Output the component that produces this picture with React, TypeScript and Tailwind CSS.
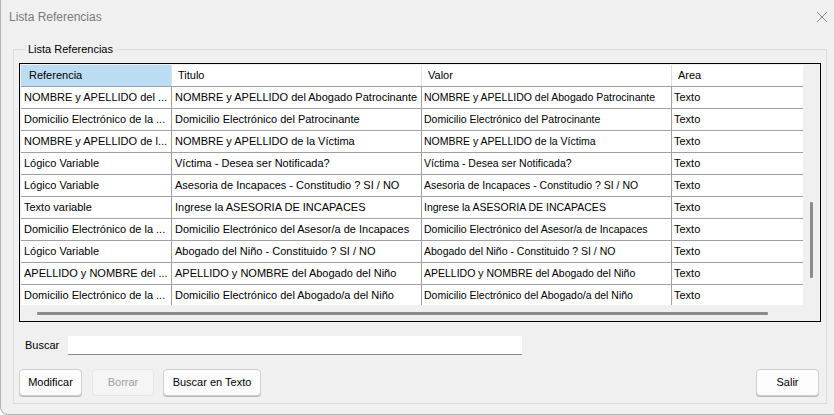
import React from "react";

const rows: [string, string, string, string][] = [
  ["NOMBRE y APELLIDO del ...", "NOMBRE y APELLIDO del Abogado Patrocinante", "NOMBRE y APELLIDO del Abogado Patrocinante", "Texto"],
  ["Domicilio Electrónico de la ...", "Domicilio Electrónico del Patrocinante", "Domicilio Electrónico del Patrocinante", "Texto"],
  ["NOMBRE y APELLIDO de l...", "NOMBRE y APELLIDO de la Víctima", "NOMBRE y APELLIDO de la Víctima", "Texto"],
  ["Lógico Variable", "Víctima - Desea ser Notificada?", "Víctima - Desea ser Notificada?", "Texto"],
  ["Lógico Variable", "Asesoria de Incapaces - Constitudio ? SI / NO", "Asesoria de Incapaces - Constitudio ? SI / NO", "Texto"],
  ["Texto variable", "Ingrese la ASESORIA DE INCAPACES", "Ingrese la ASESORIA DE INCAPACES", "Texto"],
  ["Domicilio Electrónico de la ...", "Domicilio Electrónico del Asesor/a de Incapaces", "Domicilio Electrónico del Asesor/a de Incapaces", "Texto"],
  ["Lógico Variable", "Abogado del Niño - Constituido ? SI / NO", "Abogado del Niño - Constituido ? SI / NO", "Texto"],
  ["APELLIDO y NOMBRE del ...", "APELLIDO y NOMBRE del Abogado del Niño", "APELLIDO y NOMBRE del Abogado del Niño", "Texto"],
  ["Domicilio Electrónico de la ...", "Domicilio Electrónico del Abogado/a del Niño", "Domicilio Electrónico del Abogado/a del Niño", "Texto"],
];

const font = { fontFamily: '"Liberation Sans", Arial, sans-serif' };

export default function App() {
  return (
    <div
      className="w-[834px] h-[415px] bg-[#f0f0f0] text-[11px] text-black flex flex-col border-l border-b border-[#b4b4b4] rounded-bl-[8px] overflow-hidden"
      style={font}
    >
      {/* Title bar */}
      <div className="h-[33px] flex items-center justify-between pl-[8px] pr-[6px] shrink-0">
        <span className="text-[12px] text-[#7a7a7a]">Lista Referencias</span>
        <svg width="12" height="12" viewBox="0 0 12 12" className="mr-[0px]">
          <path d="M1 1 L11 11 M11 1 L1 11" stroke="#8a8a8a" strokeWidth="1" fill="none" />
        </svg>
      </div>

      {/* Group box */}
      <fieldset className="mx-[12px] mt-[9px] border border-[#dcdcdc] px-[5px] pt-[7px] pb-[6px] flex flex-col h-[362px]">
        <legend className="ml-[7px] px-[2px] text-[11px] leading-[14px]">Lista Referencias</legend>

        {/* Grid */}
        <div className="border border-black w-[802px] h-[259px] flex flex-col bg-[#f0f0f0] shrink-0">
          <div className="flex h-[241px] pl-[1px] pt-[1px]">
            <div className="w-[782px] h-[240px] overflow-hidden bg-white">
              {/* header */}
              <div className="flex h-[22px] border-b border-[#a0a0a0]">
                <div className="w-[150px] bg-[#bcdcf4] flex items-center pl-[8px]">Referencia</div>
                <div className="w-[250px] border-l border-[#e0e0e0] flex items-center pl-[6px]">Titulo</div>
                <div className="w-[250px] border-l border-[#e0e0e0] flex items-center pl-[6px]">Valor</div>
                <div className="w-[132px] border-l border-[#e0e0e0] flex items-center pl-[6px]">Area</div>
              </div>
              {rows.map((r, i) => (
                <div key={i} className="flex h-[22px] border-b border-[#a0a0a0]">
                  <div className="w-[150px] flex items-center pl-[3px] whitespace-nowrap overflow-hidden">{r[0]}</div>
                  <div className="w-[250px] border-l border-[#a0a0a0] flex items-center pl-[3px] whitespace-nowrap overflow-hidden">{r[1]}</div>
                  <div className="w-[250px] border-l border-[#a0a0a0] flex items-center pl-[2px] whitespace-nowrap overflow-hidden text-[10.5px]">{r[2]}</div>
                  <div className="w-[132px] border-l border-[#a0a0a0] flex items-center pl-[2px] whitespace-nowrap overflow-hidden">{r[3]}</div>
                </div>
              ))}
            </div>
            {/* vertical scrollbar */}
            <div className="w-[17px] flex justify-center items-start">
              <div className="w-[3px] h-[76px] mt-[137px] bg-[#8c8c8c] rounded-[1px]" />
            </div>
          </div>
          {/* horizontal scrollbar */}
          <div className="flex-1 flex items-center pl-[17px]">
            <div className="h-[3px] w-[731px] bg-[#8c8c8c] rounded-[1px]" />
          </div>
        </div>

        {/* Buscar */}
        <div className="flex items-center mt-[14px] ml-[6px] h-[19px]">
          <span className="w-[43px]">Buscar</span>
          <div className="w-[454px] h-[19px] bg-white border-b border-[#8a8a8a]" />
        </div>

        {/* Buttons */}
        <div className="flex items-center mt-[14px] h-[27px]">
          <button className="w-[63px] h-[27px] bg-[#fdfdfd] border border-[#d0d0d0] rounded-[4px] shadow-[0_1px_0_#b8b8b8] text-[11px]" style={font}>Modificar</button>
          <button className="w-[62px] h-[27px] ml-[10px] bg-[#f5f5f5] border border-[#e6e6e6] rounded-[4px] text-[#a0a0a0] text-[11px]" style={font}>Borrar</button>
          <button className="w-[98px] h-[27px] ml-[9px] bg-[#fdfdfd] border border-[#d0d0d0] rounded-[4px] shadow-[0_1px_0_#b8b8b8] text-[11px]" style={font}>Buscar en Texto</button>
          <div className="flex-1" />
          <button className="w-[63px] h-[27px] mr-[2px] bg-[#fdfdfd] border border-[#d0d0d0] rounded-[4px] shadow-[0_1px_0_#b8b8b8] text-[11px]" style={font}>Salir</button>
        </div>
      </fieldset>
    </div>
  );
}
